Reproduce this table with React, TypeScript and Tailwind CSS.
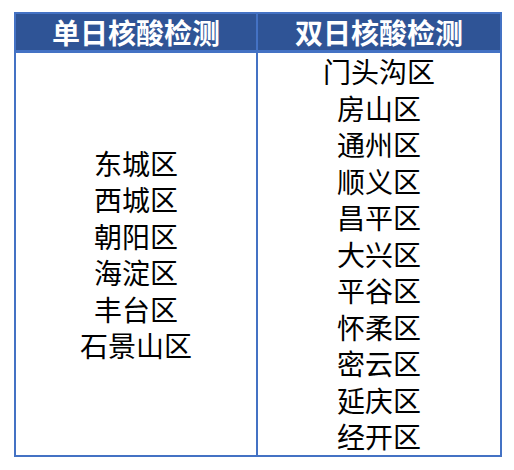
const SINGLE = ["东城区", "西城区", "朝阳区", "海淀区", "丰台区", "石景山区"];
const DOUBLE = [
	"门头沟区",
	"房山区",
	"通州区",
	"顺义区",
	"昌平区",
	"大兴区",
	"平谷区",
	"怀柔区",
	"密云区",
	"延庆区",
	"经开区",
];

export default function App() {
	return (
		<div
			className="min-h-[470px] w-[514px] bg-white pl-[14px] pt-[12px]"
			style={{ fontFamily: '"Noto Sans CJK SC", "Noto Sans", sans-serif' }}
		>
			<div className="w-[488px] border-2 border-[#4472C4]">
				{/* Header */}
				<div className="grid grid-cols-2 border-b-[3px] border-[#4472C4] bg-[#2F5496] text-[28px] font-bold leading-[36px] text-white">
					<div className="border-r-2 border-[#4472C4] text-center">单日核酸检测</div>
					<div className="text-center">双日核酸检测</div>
				</div>

				{/* Body */}
				<div className="grid h-[402px] grid-cols-2 text-[28px] leading-[36.5px] text-black">
					<div className="flex flex-col items-center justify-center border-r-2 border-[#4472C4]">
						{SINGLE.map((name) => (
							<div key={name}>{name}</div>
						))}
					</div>
					<div className="flex flex-col items-center justify-center">
						{DOUBLE.map((name) => (
							<div key={name}>{name}</div>
						))}
					</div>
				</div>
			</div>
		</div>
	);
}
